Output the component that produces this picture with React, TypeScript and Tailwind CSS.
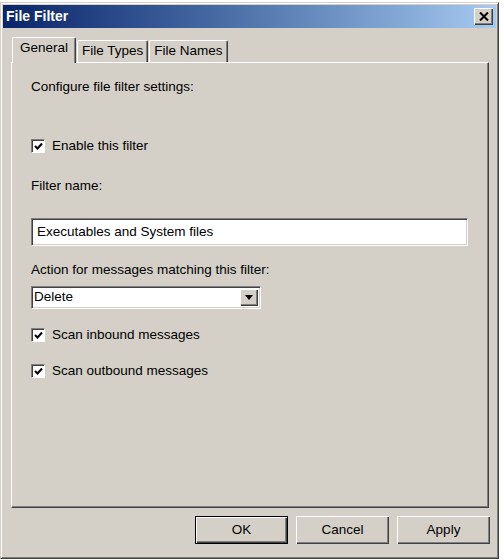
import React, { useState } from 'react';

const font = { fontFamily: '"Liberation Sans", Arial, sans-serif' };

const Check: React.FC<{ checked: boolean; onToggle: () => void; label: string }> = ({ checked, onToggle, label }) => (
  <label className="flex items-center h-[16px] cursor-default" onClick={onToggle}>
    <span className="w-[14px] h-[14px] bg-white border-t border-l border-[#808080] border-r border-b border-r-white border-b-white shadow-[inset_1px_1px_0_#404040] flex items-center justify-center">
      {checked && (
        <svg width="9" height="9" viewBox="0 0 9 9">
          <path d="M1 4 L3.5 6.5 L8 1.5" stroke="#000" strokeWidth="2" fill="none" />
        </svg>
      )}
    </span>
    <span className="ml-[7px]">{label}</span>
  </label>
);

const Btn: React.FC<{ label: string; isDefault?: boolean }> = ({ label, isDefault }) => (
  <button
    className={`w-[93px] h-[28px] bg-[#d4d0c8] text-[13.5px] text-black ${
      isDefault
        ? 'border border-black shadow-[inset_1px_1px_0_#ffffff,inset_-1px_-1px_0_#404040,inset_-2px_-2px_0_#808080]'
        : 'shadow-[inset_1px_1px_0_#ffffff,inset_-1px_-1px_0_#404040,inset_-2px_-2px_0_#808080]'
    }`}
  >
    {label}
  </button>
);

export default function App() {
  const [tab, setTab] = useState('General');
  const [enabled, setEnabled] = useState(true);
  const [inbound, setInbound] = useState(true);
  const [outbound, setOutbound] = useState(true);
  const tabs = ['General', 'File Types', 'File Names'];

  return (
    <div className="w-[504px] h-[560px] bg-white overflow-hidden" style={font}>
      {/* Window */}
      <div className="mt-[2px] w-[499px] h-[557px] bg-[#d4d0c8] border-t border-l border-[#d4d0c8] border-r border-b border-r-[#404040] border-b-[#404040] shadow-[inset_1px_1px_0_#ffffff,inset_-1px_-1px_0_#808080] p-[2px] flex flex-col">
        {/* Title bar */}
        <div className="h-[23px] bg-gradient-to-r from-[#0a246a] to-[#a6caf0] flex items-center justify-between pl-[3px] pr-[3px]">
          <span className="text-white font-bold text-[14px]">File Filter</span>
          <button className="w-[19px] h-[17px] bg-[#d4d0c8] shadow-[inset_1px_1px_0_#ffffff,inset_-1px_-1px_0_#404040,inset_-2px_-2px_0_#808080] flex items-center justify-center">
            <svg width="10" height="9" viewBox="0 0 10 9">
              <path d="M1 0.5 L9 8.5 M9 0.5 L1 8.5" stroke="#000" strokeWidth="2" />
            </svg>
          </button>
        </div>

        {/* Tabs */}
        <div className="mt-[9px] ml-[8px] w-[478px] text-[13.5px] text-black">
          <div className="flex items-end h-[25px] pl-[1px] relative z-10">
            {tabs.map(t =>
              t === tab ? (
                <button
                  key={t}
                  onClick={() => setTab(t)}
                  className="h-[26px] -mb-[1px] px-[7px] bg-[#d4d0c8] border-t border-l border-white border-r border-r-[#404040] rounded-t-[2px] shadow-[inset_-1px_0_0_#808080] pb-[4px]"
                >
                  {t}
                </button>
              ) : (
                <button
                  key={t}
                  onClick={() => setTab(t)}
                  className="h-[22px] px-[4px] bg-[#d4d0c8] border-t border-l border-white border-r border-r-[#404040] rounded-t-[2px] shadow-[inset_-1px_0_0_#808080] ml-[1px]"
                >
                  {t}
                </button>
              )
            )}
          </div>

          {/* Panel */}
          <div className="h-[446px] border-t border-l border-white border-r border-b border-r-[#404040] border-b-[#404040] shadow-[inset_-1px_-1px_0_#808080] pl-[19px] pt-[16px]">
            {tab === 'General' && (
              <div className="flex flex-col">
                <div className="h-[16px] leading-[16px]">Configure file filter settings:</div>
                <div className="mt-[43px]">
                  <Check checked={enabled} onToggle={() => setEnabled(!enabled)} label="Enable this filter" />
                </div>
                <div className="mt-[24px] h-[16px] leading-[16px]">Filter name:</div>
                <div className="mt-[24px] w-[437px] h-[28px] bg-white border-t border-l border-[#808080] border-r border-b border-r-white border-b-white shadow-[inset_1px_1px_0_#404040,inset_-1px_-1px_0_#d4d0c8] flex items-center pl-[5px]">
                  Executables and System files
                </div>
                <div className="mt-[16px] h-[16px] leading-[16px]">Action for messages matching this filter:</div>
                <div className="mt-[8px] w-[230px] h-[23px] bg-white border-t border-l border-[#808080] border-r border-b border-r-white border-b-white shadow-[inset_1px_1px_0_#404040,inset_-1px_-1px_0_#d4d0c8] flex items-center justify-between pl-[2px] pr-[2px]">
                  <span>Delete</span>
                  <span className="w-[18px] h-[17px] bg-[#d4d0c8] shadow-[inset_1px_1px_0_#ffffff,inset_-1px_-1px_0_#404040,inset_-2px_-2px_0_#808080] flex items-center justify-center">
                    <svg width="8" height="5" viewBox="0 0 8 5">
                      <path d="M0 0 L8 0 L4 5 Z" fill="#000" />
                    </svg>
                  </span>
                </div>
                <div className="mt-[18px]">
                  <Check checked={inbound} onToggle={() => setInbound(!inbound)} label="Scan inbound messages" />
                </div>
                <div className="mt-[20px]">
                  <Check checked={outbound} onToggle={() => setOutbound(!outbound)} label="Scan outbound messages" />
                </div>
              </div>
            )}
          </div>
        </div>

        {/* Buttons */}
        <div className="mt-[8px] ml-[192px] flex gap-[8px]">
          <Btn label="OK" isDefault />
          <Btn label="Cancel" />
          <Btn label="Apply" />
        </div>
      </div>
    </div>
  );
}
